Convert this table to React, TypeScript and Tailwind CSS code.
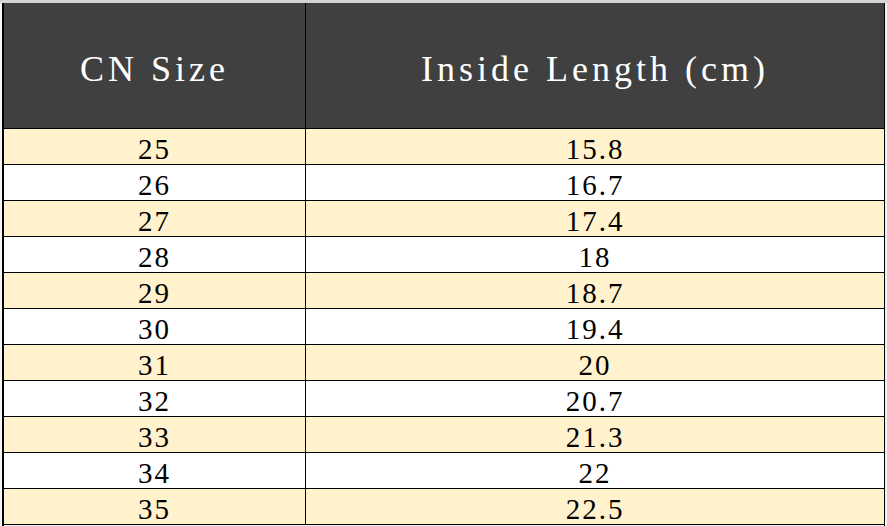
import React from "react";

const rows = [
  ["25", "15.8"],
  ["26", "16.7"],
  ["27", "17.4"],
  ["28", "18"],
  ["29", "18.7"],
  ["30", "19.4"],
  ["31", "20"],
  ["32", "20.7"],
  ["33", "21.3"],
  ["34", "22"],
  ["35", "22.5"],
];

export default function App() {
  return (
    <div className="w-[887px] h-[526px] overflow-hidden bg-[#f2f2f2] flex flex-col font-['Liberation_Serif','Times_New_Roman',serif]">
      {/* spreadsheet column strip */}
      <div className="h-[3px] bg-[#d4d4d4] shrink-0" />
      <div className="flex flex-1">
        <div className="w-[2px] bg-[#f5f5f5] shrink-0" />
        <div className="w-[883px] flex flex-col border-l-[2px] border-r border-black">
          {/* header */}
          <div className="grid grid-cols-[302px_1fr] h-[125px] bg-[#404040] text-white text-[36px] tracking-[4px]">
            <div className="flex items-center justify-center border-r border-black pt-[6px]">CN Size</div>
            <div className="flex items-center justify-center pt-[6px]">Inside Length (cm)</div>
          </div>
          {rows.map(([size, len], i) => (
            <div
              key={size}
              className={
                "grid grid-cols-[302px_1fr] h-[36px] border-t border-black text-black text-[29px] tracking-[2px] leading-none " +
                (i % 2 === 0 ? "bg-[#fff2cc]" : "bg-white")
              }
            >
              <div className="flex items-center justify-center border-r border-black pt-[6px]">{size}</div>
              <div className="flex items-center justify-center pt-[6px]">{len}</div>
            </div>
          ))}
          <div className="border-t border-black" />
        </div>
      </div>
    </div>
  );
}
